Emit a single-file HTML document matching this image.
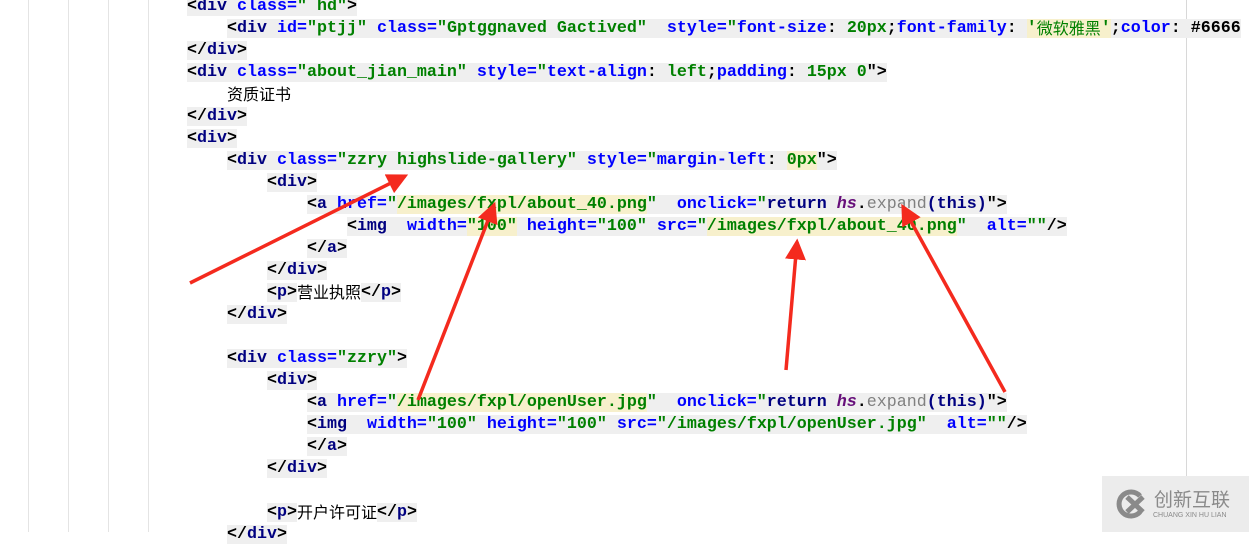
<!DOCTYPE html>
<html><head><meta charset="utf-8"><style>
body{margin:0;width:1249px;height:532px;overflow:hidden;background:#fff;position:relative;font-family:"Liberation Mono","Noto Sans CJK SC",monospace;}
.guide{position:absolute;top:0;width:1px;height:532px;background:#e4e4e4}
.l{position:absolute;left:187px;height:22px;line-height:22px;font-size:16.67px;white-space:pre;font-weight:bold;color:#000}
.t{color:#000080}.a{color:#0000ff}.v{color:#008000}.k{color:#000080}
.g{background:#efefef}.y{background:#f7f0cc}
.cn{font-family:"Noto Sans CJK SC",sans-serif;font-weight:normal;font-size:16px;display:inline-block;vertical-align:top;height:22px;line-height:18px}
.hs{color:#660e7a;font-style:italic}.ex{color:#808080;font-weight:normal}
</style></head><body>
<div class="guide" style="left:28px"></div><div class="guide" style="left:68px"></div><div class="guide" style="left:108px"></div><div class="guide" style="left:148px"></div>
<div class="guide" style="left:1186px;background:#d8d8d8"></div>

<div class="l" style="top:-4px"><span class="g">&lt;<span class="t">div</span> <span class="a">class=</span><span class="v">" hd"</span>&gt;</span></div>
<div class="l" style="top:18px">    <span class="g">&lt;<span class="t">div</span> <span class="a">id=</span><span class="v">"ptjj"</span> <span class="a">class=</span><span class="v">"Gptggnaved Gactived"</span>  <span class="a">style=</span><span class="v">"</span><span class="a">font-size</span>: <span class="v">20px</span>;<span class="a">font-family</span>: <span class="v y">'<span class="cn">微软雅黑</span>'</span>;<span class="a">color</span>: #6666</span></div>
<div class="l" style="top:40px"><span class="g">&lt;/<span class="t">div</span>&gt;</span></div>
<div class="l" style="top:62px"><span class="g">&lt;<span class="t">div</span> <span class="a">class=</span><span class="v">"about_jian_main"</span> <span class="a">style=</span><span class="v">"</span><span class="a">text-align</span>: <span class="v">left</span>;<span class="a">padding</span>: <span class="v">15px 0</span>"&gt;</span></div>
<div class="l" style="top:84px">    <span class="cn">资质证书</span></div>
<div class="l" style="top:106px"><span class="g">&lt;/<span class="t">div</span>&gt;</span></div>
<div class="l" style="top:128px"><span class="g">&lt;<span class="t">div</span>&gt;</span></div>
<div class="l" style="top:150px">    <span class="g">&lt;<span class="t">div</span> <span class="a">class=</span><span class="v">"zzry highslide-gallery"</span> <span class="a">style=</span><span class="v">"</span><span class="a">margin-left</span>: <span class="v y">0px</span>"&gt;</span></div>
<div class="l" style="top:172px">        <span class="g">&lt;<span class="t">div</span>&gt;</span></div>
<div class="l" style="top:194px">            <span class="g">&lt;<span class="t">a</span> <span class="a">href=</span><span class="v">"<span class="y">/images/fxpl/about_40.png</span>"</span>  <span class="a">onclick=</span><span class="v">"</span><span class="k">return </span><span class="hs">hs</span>.<span class="ex">expand</span><span class="k">(this)</span>"&gt;</span></div>
<div class="l" style="top:216px">                <span class="g">&lt;<span class="t">img</span>  <span class="a">width=</span><span class="v y">"100"</span> <span class="a">height=</span><span class="v">"100"</span> <span class="a">src=</span><span class="v">"<span class="y">/images/fxpl/about_40.png</span>"</span>  <span class="a">alt=</span><span class="v">""</span>/&gt;</span></div>
<div class="l" style="top:238px">            <span class="g">&lt;/<span class="t">a</span>&gt;</span></div>
<div class="l" style="top:260px">        <span class="g">&lt;/<span class="t">div</span>&gt;</span></div>
<div class="l" style="top:282px">        <span class="g">&lt;<span class="t">p</span>&gt;</span><span class="cn">营业执照</span><span class="g">&lt;/<span class="t">p</span>&gt;</span></div>
<div class="l" style="top:304px">    <span class="g">&lt;/<span class="t">div</span>&gt;</span></div>
<div class="l" style="top:348px">    <span class="g">&lt;<span class="t">div</span> <span class="a">class=</span><span class="v">"zzry"</span>&gt;</span></div>
<div class="l" style="top:370px">        <span class="g">&lt;<span class="t">div</span>&gt;</span></div>
<div class="l" style="top:392px">            <span class="g">&lt;<span class="t">a</span> <span class="a">href=</span><span class="v">"<span class="y">/images/fxpl/openUser.jpg</span>"</span>  <span class="a">onclick=</span><span class="v">"</span><span class="k">return </span><span class="hs">hs</span>.<span class="ex">expand</span><span class="k">(this)</span>"&gt;</span></div>
<div class="l" style="top:414px">            <span class="g">&lt;<span class="t">img</span>  <span class="a">width=</span><span class="v">"100"</span> <span class="a">height=</span><span class="v">"100"</span> <span class="a">src=</span><span class="v">"/images/fxpl/openUser.jpg"</span>  <span class="a">alt=</span><span class="v">""</span>/&gt;</span></div>
<div class="l" style="top:436px">            <span class="g">&lt;/<span class="t">a</span>&gt;</span></div>
<div class="l" style="top:458px">        <span class="g">&lt;/<span class="t">div</span>&gt;</span></div>
<div class="l" style="top:502px">        <span class="g">&lt;<span class="t">p</span>&gt;</span><span class="cn">开户许可证</span><span class="g">&lt;/<span class="t">p</span>&gt;</span></div>
<div class="l" style="top:524px">    <span class="g">&lt;/<span class="t">div</span>&gt;</span></div>

<svg style="position:absolute;left:0;top:0" width="1249" height="532">
<defs><marker id="h" markerWidth="6" markerHeight="6" refX="5" refY="3" orient="auto"><path d="M0,0 L6,3 L0,6 Z" fill="#f42a1e"/></marker></defs>
<g stroke="#f42a1e" stroke-width="3.5" fill="none" marker-end="url(#h)">
<line x1="190" y1="283" x2="405" y2="176"/>
<line x1="418" y1="400" x2="494" y2="205"/>
<line x1="786" y1="370" x2="797" y2="242"/>
<line x1="1005" y1="392" x2="903" y2="207"/>
</g></svg>

<div style="position:absolute;left:1102px;top:476px;width:147px;height:56px;background:#ececec"></div>
<svg style="position:absolute;left:1114px;top:488px" width="36" height="32"><path d="M26 8 A12 12 0 1 0 26 24" fill="none" stroke="#8a8a8a" stroke-width="5"/><path d="M13 9 L29 24 M29 9 L13 24" stroke="#8a8a8a" stroke-width="5"/></svg>
<div style="position:absolute;left:1154px;top:488px;font-family:'Noto Sans CJK SC',sans-serif;font-size:19px;color:#8a8a8a;line-height:22px">创新互联</div>
<div style="position:absolute;left:1153px;top:512px;font-family:'Liberation Sans',sans-serif;font-size:7px;color:#8a8a8a">CHUANG XIN HU LIAN</div>
</body></html>
